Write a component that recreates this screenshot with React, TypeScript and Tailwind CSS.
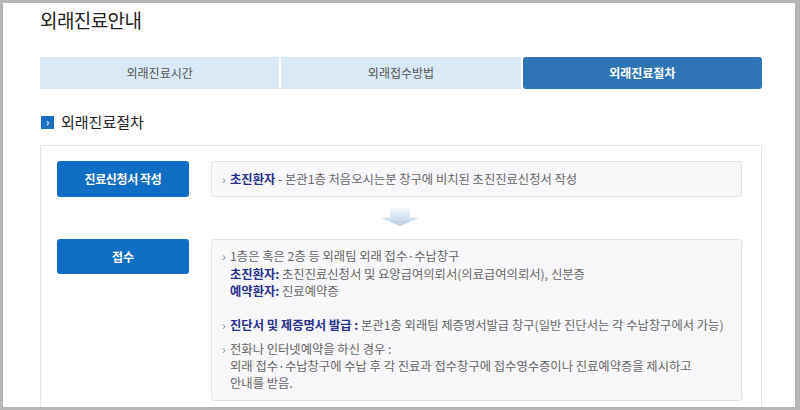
import React from 'react'

const font = { fontFamily: '"Noto Sans CJK KR", "Noto Sans", sans-serif' }

function Bullet() {
  return <span className="inline-block w-[8px] text-[#8a8a8a]">›</span>
}

function Strong({ children }: { children: React.ReactNode }) {
  return <b className="font-bold text-[#27308a]">{children}</b>
}

function DownArrow() {
  return (
    <svg width="38" height="18" viewBox="0 0 38 18">
      <defs>
        <linearGradient id="arr" x1="0" y1="0" x2="0" y2="1">
          <stop offset="0" stopColor="#f3f7fb" />
          <stop offset="1" stopColor="#b9d0e4" />
        </linearGradient>
      </defs>
      <path d="M9 0 H29 V10 H38 L19 18 L0 10 H9 Z" fill="url(#arr)" />
    </svg>
  )
}

export default function App() {
  const tabs = ['외래진료시간', '외래접수방법', '외래진료절차']

  return (
    <div className="h-[410px] w-[800px] overflow-hidden bg-[#b6b6b6] pb-[3px] pl-[3px] pr-[5px] pt-[3px]" style={font}>
      <div className="h-full overflow-hidden bg-white pl-[37px] pr-[33px]">
        <h1 className="mt-[3px] text-[19px] leading-[28px] font-normal tracking-[-0.6px] text-[#222]">외래진료안내</h1>

        <div className="mt-[23px] grid grid-cols-3 gap-[2px]">
          {tabs.map((t, i) =>
            i === 2 ? (
              <div key={t} className="flex h-[32px] items-center justify-center rounded-[3px] bg-[#2f74b5] text-[12px] font-bold text-white">
                {t}
              </div>
            ) : (
              <div key={t} className="flex h-[32px] items-center justify-center bg-[#d9eaf6] text-[12px] text-[#555]">
                {t}
              </div>
            )
          )}
        </div>

        <div className="mt-[23px] flex h-[20px] items-center">
          <span className="ml-[1px] flex h-[13px] w-[13px] items-center justify-center bg-[#1a6fc4] text-[10px] leading-none font-bold text-white">›</span>
          <span className="ml-[7px] text-[15px] text-[#222]">외래진료절차</span>
        </div>

        <div className="mt-[13px] h-[300px] border border-[#e6e6e6] bg-white pl-[16px] pr-[19px] pt-[15px]">
          <div className="flex gap-[22px]">
            <div className="flex h-[36px] w-[132px] shrink-0 items-center justify-center rounded-[3px] bg-[#0f6ec3] text-[12px] font-bold tracking-[-0.4px] text-white">
              진료신청서 작성
            </div>
            <div className="flex h-[36px] flex-1 items-center rounded-[3px] border border-[#e4e4e4] bg-[#f8f8fa] pl-[10px] text-[12.3px] text-[#666]">
              <Bullet />
              <Strong>초진환자</Strong>
              <span>&nbsp;- 본관1층 처음오시는분 창구에 비치된 초진진료신청서 작성</span>
            </div>
          </div>

          <div className="flex h-[42px] items-start justify-center pt-[11px]">
            <DownArrow />
          </div>

          <div className="flex gap-[22px]">
            <div className="flex h-[35px] w-[132px] shrink-0 items-center justify-center rounded-[3px] bg-[#0f6ec3] text-[12px] font-bold text-white">
              접수
            </div>
            <div className="h-[162px] flex-1 rounded-[3px] border border-[#e4e4e4] bg-[#f8f8fa] pl-[10px] pt-[8px] text-[12.3px] leading-[17.5px] text-[#666]">
              <p>
                <Bullet />1층은 혹은 2층 등 외래팀 외래 접수·수납창구
              </p>
              <p className="pl-[8px]">
                <Strong>초진환자:</Strong> 초진진료신청서 및 요양급여의뢰서(의료급여의뢰서), 신분증
              </p>
              <p className="pl-[8px]">
                <Strong>예약환자:</Strong> 진료예약증
              </p>
              <p className="mt-[16px]">
                <Bullet />
                <Strong>진단서 및 제증명서 발급 :</Strong> 본관1층 외래팀 제증명서발급 창구(일반 진단서는 각 수납창구에서 가능)
              </p>
              <div className="mt-[7px] leading-[17px]">
                <p>
                  <Bullet />전화나 인터넷예약을 하신 경우 :
                </p>
                <p className="pl-[8px]">외래 접수·수납창구에 수납 후 각 진료과 접수창구에 접수영수증이나 진료예약증을 제시하고</p>
                <p className="pl-[8px]">안내를 받음.</p>
              </div>
            </div>
          </div>
        </div>
      </div>
    </div>
  )
}
